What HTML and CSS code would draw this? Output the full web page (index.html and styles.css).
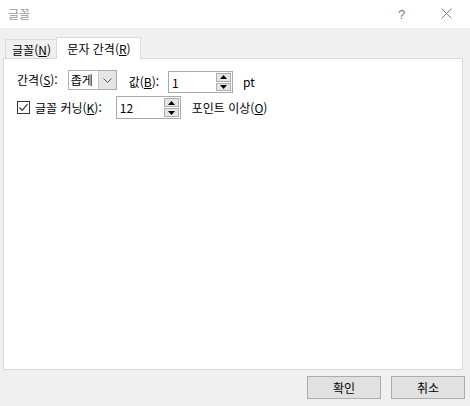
FILE: index.html
```html
<!DOCTYPE html>
<html lang="ko">
<head>
<meta charset="utf-8">
<title>글꼴</title>
<link rel="stylesheet" href="styles.css">
</head>
<body>
<div class="window">
  <div class="titlebar">
    <span class="title">글꼴</span>
    <span class="tb-btn help">?</span>
    <span class="tb-btn close">
      <svg width="11" height="11" viewBox="0 0 11 11"><path d="M0.5 0.5 L10.5 10.5 M10.5 0.5 L0.5 10.5" stroke="#7a7a7a" stroke-width="1" fill="none"/></svg>
    </span>
  </div>
  <div class="main">
    <div class="tabs">
      <div class="tab">글꼴(<u>N</u>)</div>
      <div class="tab active">문자 간격(<u>R</u>)</div>
    </div>
    <div class="panel">
      <div class="row row1">
        <span class="label lbl-spacing">간격(<u>S</u>):</span>
        <div class="combo">
          <span class="combo-text">좁게</span>
          <span class="combo-btn">
            <svg width="9" height="5" viewBox="0 0 9 5"><path d="M0.5 0.5 L4.5 4.5 L8.5 0.5" stroke="#555" stroke-width="1" fill="none"/></svg>
          </span>
        </div>
        <span class="label lbl-value">값(<u>B</u>):</span>
        <div class="spin spin1">
          <span class="spin-text">1</span>
          <span class="spin-btns">
            <span class="spin-btn"><svg width="7" height="4" viewBox="0 0 7 4"><path d="M0 4 L3.5 0 L7 4 Z" fill="#000"/></svg></span>
            <span class="spin-btn"><svg width="7" height="4" viewBox="0 0 7 4"><path d="M0 0 L3.5 4 L7 0 Z" fill="#000"/></svg></span>
          </span>
        </div>
        <span class="label lbl-pt">pt</span>
      </div>
      <div class="row row2">
        <span class="checkbox">
          <svg width="11" height="11" viewBox="0 0 11 11"><path d="M1.5 5.5 L4.2 8.3 L9.5 2.2" stroke="#333" stroke-width="1.2" fill="none"/></svg>
        </span>
        <span class="label lbl-kern">글꼴 커닝(<u>K</u>):</span>
        <div class="spin spin2">
          <span class="spin-text">12</span>
          <span class="spin-btns">
            <span class="spin-btn"><svg width="7" height="4" viewBox="0 0 7 4"><path d="M0 4 L3.5 0 L7 4 Z" fill="#000"/></svg></span>
            <span class="spin-btn"><svg width="7" height="4" viewBox="0 0 7 4"><path d="M0 0 L3.5 4 L7 0 Z" fill="#000"/></svg></span>
          </span>
        </div>
        <span class="label lbl-above">포인트 이상(<u>O</u>)</span>
      </div>
    </div>
    <div class="buttons">
      <button class="btn">확인</button>
      <button class="btn">취소</button>
    </div>
  </div>
</div>
</body>
</html>
```
FILE: styles.css
```css
* { box-sizing: border-box; }
html, body { margin: 0; padding: 0; }
body {
  font-family: "Noto Sans CJK KR", "Noto Sans", sans-serif;
  font-size: 12px;
  color: #000;
}
.window {
  width: 470px;
  height: 406px;
  background: #f0f0f0;
  overflow: hidden;
}
.titlebar {
  height: 28px;
  background: #fff;
  display: flex;
  align-items: center;
  padding-left: 8px;
}
.title {
  color: #999;
  font-size: 12px;
  line-height: 14px;
  margin-top: -1px;
}
.tb-btn {
  width: 46px;
  height: 28px;
  display: flex;
  align-items: center;
  justify-content: center;
  color: #7a7a7a;
}
.help {
  margin-left: auto;
  font-family: "Liberation Sans", sans-serif;
  font-size: 13px;
  padding-left: 3px;
}
.close { width: 47px; padding-bottom: 2px; }
.main {
  padding: 9px 7px 0 3px;
}
.tabs {
  display: flex;
  align-items: flex-end;
  height: 22px;
  margin-bottom: -1px;
  padding-left: 2px;
  position: relative;
  z-index: 1;
}
.tab {
  width: 53px;
  height: 19px;
  margin-bottom: 1px;
  border: 1px solid #d9d9d9;
  border-bottom: none;
  background: #f0f0f0;
  display: flex;
  align-items: center;
  justify-content: center;
  line-height: 14px;
  padding-top: 2px;
}
.tab.active {
  width: 85px;
  height: 22px;
  margin-bottom: 0;
  margin-left: -2px;
  background: #fff;
  padding-top: 0;
  padding-left: 1px;
}
.panel {
  height: 312px;
  background: #fff;
  border: 1px solid #d9d9d9;
  padding: 12px 0 0 13px;
}
.row {
  display: flex;
  align-items: flex-start;
}
.row1 { height: 23px; margin-top: -1px; }
.row2 { margin-top: 3px; }
.label { white-space: nowrap; }
.lbl-spacing { line-height: 19px; }
.combo {
  margin-left: 10px;
  width: 49px;
  height: 20px;
  border: 1px solid #adadad;
  display: flex;
  background: #fff;
}
.combo-text {
  flex: 1;
  line-height: 17px;
  padding-left: 2px;
}
.combo-btn {
  width: 18px;
  background: #e5e5e5;
  border-left: 1px solid #c8c8c8;
  display: flex;
  align-items: center;
  justify-content: center;
}
.lbl-value { margin-left: 12px; margin-top: 1px; line-height: 22px; }
.spin {
  height: 22px;
  width: 65px;
  border: 1px solid #a9a9a9;
  background: #fff;
  display: flex;
  padding: 1px;
}
.spin1 { margin-left: 9px; margin-top: 1px; }
.spin-text { flex: 1; line-height: 19px; padding-left: 2px; }
.spin-btns {
  width: 15px;
  display: flex;
  flex-direction: column;
  gap: 1px;
}
.spin-btn {
  flex: 1;
  background: #e6e6e6;
  border: 1px solid #adadad;
  display: flex;
  align-items: center;
  justify-content: center;
}
.lbl-pt { margin-left: 10px; margin-top: 1px; line-height: 22px; }
.checkbox {
  width: 13px;
  height: 13px;
  border: 1px solid #333;
  margin-top: 5px;
  display: flex;
  align-items: center;
  justify-content: center;
  background: #fff;
}
.lbl-kern { margin-left: 5px; line-height: 23px; }
.spin2 { height: 23px; margin-left: 14px; }
.spin2 .spin-text { line-height: 20px; }
.lbl-above { margin-left: 11px; line-height: 23px; }
.buttons {
  display: flex;
  justify-content: flex-end;
  gap: 10px;
  margin-top: 6px;
  margin-right: -2px;
}
.btn {
  width: 74px;
  height: 23px;
  background: #e1e1e1;
  border: 1px solid #adadad;
  font-family: "Noto Sans CJK KR", "Noto Sans", sans-serif;
  font-size: 12px;
  color: #000;
  padding: 0;
  line-height: 20px;
}
u { text-underline-offset: 1px; }
```
